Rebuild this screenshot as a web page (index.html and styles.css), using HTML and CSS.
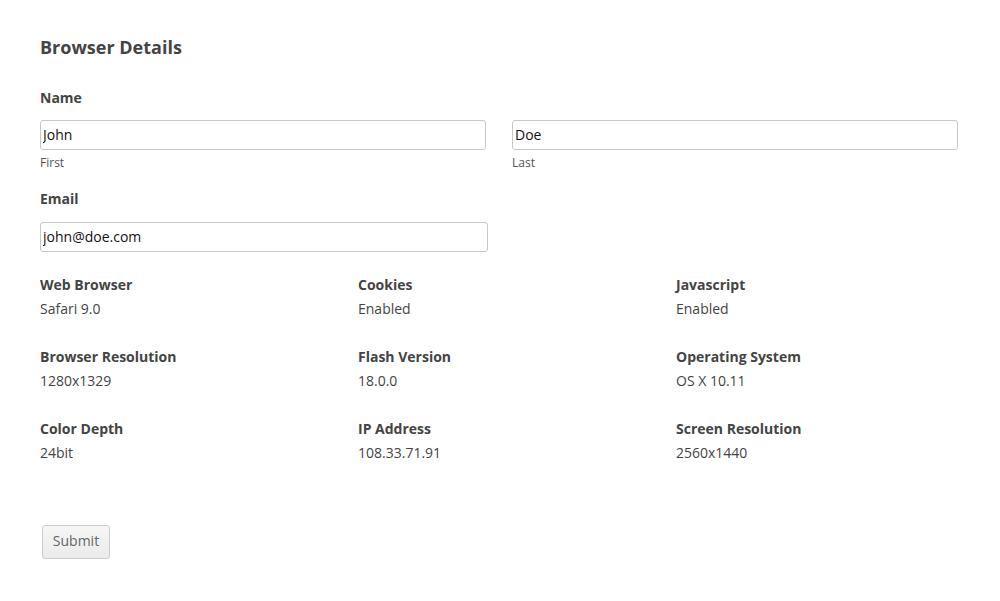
FILE: index.html
```html
<!DOCTYPE html>
<html>
<head>
<meta charset="utf-8">
<link rel="stylesheet" href="styles.css">
</head>
<body>
<form class="form">
  <h2 class="title">Browser Details</h2>

  <div class="label label-name">Name</div>
  <div class="name-row">
    <div class="name-field">
      <input class="input" type="text" value="John">
      <div class="sublabel">First</div>
    </div>
    <div class="name-field">
      <input class="input" type="text" value="Doe">
      <div class="sublabel">Last</div>
    </div>
  </div>

  <div class="label label-email">Email</div>
  <input class="input input-email" type="text" value="john@doe.com">

  <div class="info-grid">
    <div class="info"><div class="label">Web Browser</div><div class="value">Safari 9.0</div></div>
    <div class="info"><div class="label">Cookies</div><div class="value">Enabled</div></div>
    <div class="info"><div class="label">Javascript</div><div class="value">Enabled</div></div>
    <div class="info"><div class="label">Browser Resolution</div><div class="value">1280x1329</div></div>
    <div class="info"><div class="label">Flash Version</div><div class="value">18.0.0</div></div>
    <div class="info"><div class="label">Operating System</div><div class="value">OS X 10.11</div></div>
    <div class="info"><div class="label">Color Depth</div><div class="value">24bit</div></div>
    <div class="info"><div class="label">IP Address</div><div class="value">108.33.71.91</div></div>
    <div class="info"><div class="label">Screen Resolution</div><div class="value">2560x1440</div></div>
  </div>

  <button class="submit" type="button">Submit</button>
</form>
</body>
</html>
```

FILE: styles.css
```css
html, body {
  margin: 0;
  padding: 0;
  background: #ffffff;
}

body {
  font-family: "Open Sans", "Liberation Sans", sans-serif;
  color: #444444;
}

.form {
  padding: 35px 0 0 40px;
}

.title {
  margin: 0;
  font-size: 18px;
  line-height: 24px;
  font-weight: 700;
  color: #444444;
}

.label {
  font-size: 14px;
  line-height: 20px;
  font-weight: 700;
  color: #444444;
}

.label-name {
  margin-top: 29px;
}

.name-row {
  display: flex;
  gap: 26px;
  width: 918px;
  margin-top: 12px;
}

.name-field {
  flex: 1;
  display: flex;
  flex-direction: column;
}

.input {
  box-sizing: border-box;
  height: 30px;
  width: 100%;
  margin: 0;
  padding: 0 2px 2px;
  border: 1px solid #c7c7c7;
  border-radius: 3px;
  font-family: "Open Sans", "Liberation Sans", sans-serif;
  font-size: 14px;
  color: #111111;
  background: #ffffff;
  outline: none;
}

.sublabel {
  margin-top: 5px;
  font-size: 12px;
  line-height: 16px;
  color: #555555;
}

.label-email {
  margin-top: 18px;
}

.input-email {
  display: block;
  width: 448px;
  margin-top: 13px;
}

.info-grid {
  display: grid;
  grid-template-columns: repeat(3, 318px);
  row-gap: 28px;
  margin-top: 23px;
}

.info .value {
  margin-top: 4px;
  font-size: 14px;
  line-height: 20px;
  color: #444444;
}

.submit {
  display: block;
  box-sizing: border-box;
  margin: 62px 0 0 2px;
  width: 68px;
  height: 34px;
  padding: 0 0 3px;
  border: 1px solid #cccccc;
  border-radius: 3px;
  background: linear-gradient(#f6f6f6, #ebebeb);
  box-shadow: 0 1px 1px rgba(0, 0, 0, 0.06);
  font-family: "Open Sans", "Liberation Sans", sans-serif;
  font-size: 14px;
  color: #666666;
}
```
